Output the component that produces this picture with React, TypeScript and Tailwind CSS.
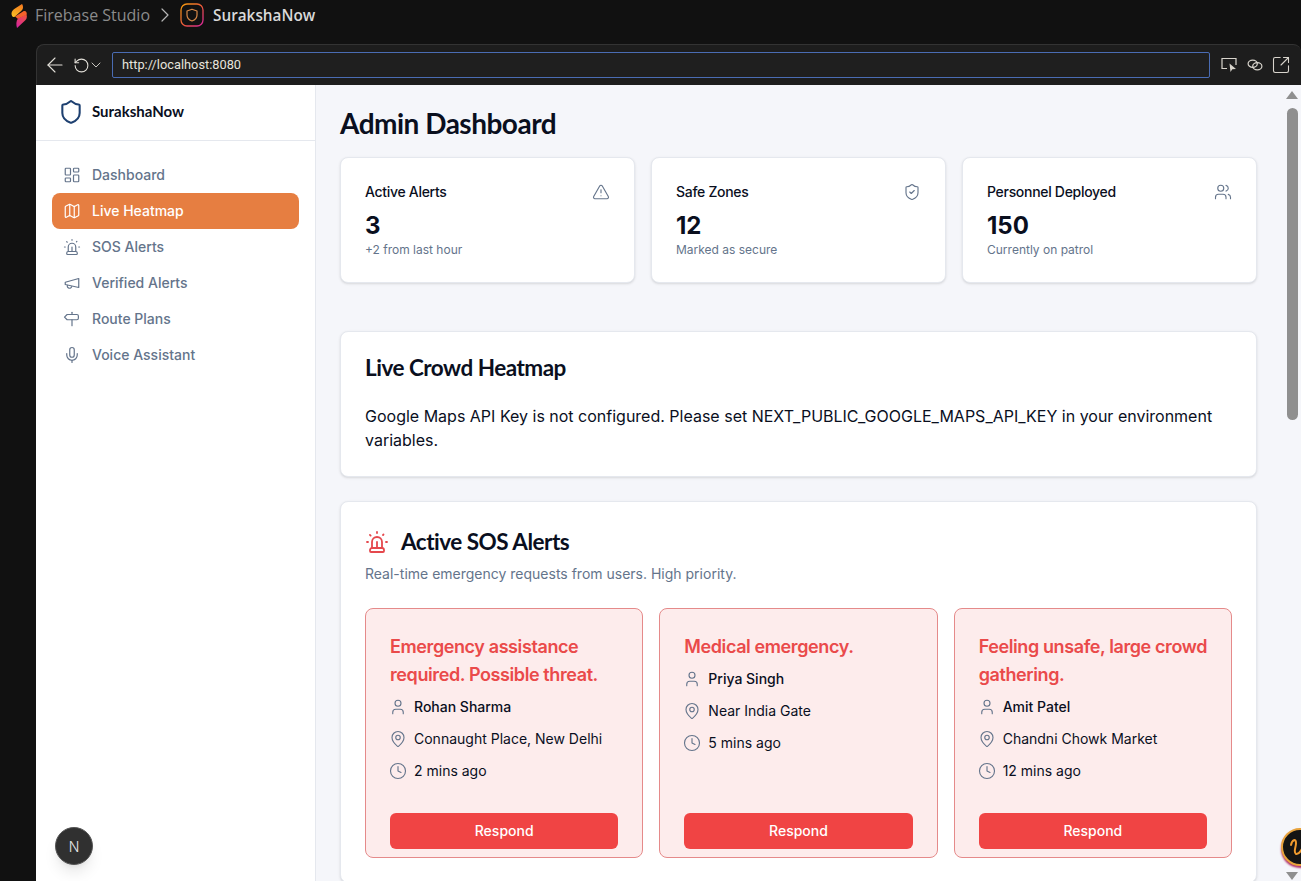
import React from 'react';
import {
  ArrowLeft,
  ChevronDown,
  ChevronRight,
  Clock,
  LayoutDashboard,
  Map as MapIcon,
  MapPin,
  Mic,
  RotateCw,
  Shield,
  ShieldCheck,
  Siren,
  SquareArrowOutUpRight,
  TriangleAlert,
  User,
  Users,
} from 'lucide-react';

const headingFont = "font-['Lato','Open_Sans',sans-serif] tracking-[-0.5px]";

interface IconProps {
  className?: string;
  strokeWidth?: number;
}

const MegaphoneIcon = ({ className, strokeWidth }: IconProps) => (
  <svg className={className} viewBox="0 0 24 24" fill="none" stroke="currentColor" strokeWidth={strokeWidth} strokeLinecap="round" strokeLinejoin="round">
    <path d="m3 11 18-5v12L3 14v-3z" />
    <path d="M11.6 16.8a3 3 0 1 1-5.8-1.6" />
  </svg>
);

const SignpostIcon = ({ className, strokeWidth }: IconProps) => (
  <svg className={className} viewBox="0 0 24 24" fill="none" stroke="currentColor" strokeWidth={strokeWidth} strokeLinecap="round" strokeLinejoin="round">
    <path d="M12 3v3" />
    <path d="M18.5 13h-13L2 9.5 5.5 6h13a2 2 0 0 1 2 2v3a2 2 0 0 1-2 2Z" />
    <path d="M12 13v8" />
  </svg>
);

const navItems = [
  { label: 'Dashboard', icon: LayoutDashboard },
  { label: 'Live Heatmap', icon: MapIcon, active: true },
  { label: 'SOS Alerts', icon: Siren },
  { label: 'Verified Alerts', icon: MegaphoneIcon },
  { label: 'Route Plans', icon: SignpostIcon },
  { label: 'Voice Assistant', icon: Mic },
];

const stats = [
  { title: 'Active Alerts', value: '3', note: '+2 from last hour', icon: TriangleAlert },
  { title: 'Safe Zones', value: '12', note: 'Marked as secure', icon: ShieldCheck },
  { title: 'Personnel Deployed', value: '150', note: 'Currently on patrol', icon: Users },
];

const alerts = [
  { title: 'Emergency assistance required. Possible threat.', name: 'Rohan Sharma', place: 'Connaught Place, New Delhi', time: '2 mins ago' },
  { title: 'Medical emergency.', name: 'Priya Singh', place: 'Near India Gate', time: '5 mins ago' },
  { title: 'Feeling unsafe, large crowd gathering.', name: 'Amit Patel', place: 'Chandni Chowk Market', time: '12 mins ago' },
];

const FirebaseLogo = () => (
  <svg width="20" height="26" viewBox="0 0 20 26" fill="none">
    <defs>
      <linearGradient id="fb-top" x1="0.6" y1="0" x2="0.3" y2="1">
        <stop offset="0" stopColor="#f57c1f" />
        <stop offset="1" stopColor="#fbbf24" />
      </linearGradient>
      <linearGradient id="fb-bottom" x1="0.8" y1="0" x2="0.2" y2="1">
        <stop offset="0" stopColor="#f0523d" />
        <stop offset="1" stopColor="#d6249f" />
      </linearGradient>
    </defs>
    <path d="M13 2 C15 5 14 8 11 10 L6 14.5 C4 16 2.5 14 2.5 11.5 C2.5 9 4 8 6 6.5 Z" fill="url(#fb-top)" />
    <path d="M6 14.5 L14 9.5 C16.5 8 18.5 10.5 17.5 13 L9 17 Z" fill="#f4622a" />
    <path d="M9 16.5 L17.5 12.5 C18.5 15.5 17.5 17.5 15 19.5 L8 26 C7 23 7 19 9 16.5 Z" fill="url(#fb-bottom)" />
  </svg>
);

const AppLogo = () => (
  <svg width="24" height="24" viewBox="0 0 24 24" fill="none">
    <defs>
      <linearGradient id="app-border" x1="0" y1="0" x2="1" y2="1">
        <stop offset="0" stopColor="#f59e0b" />
        <stop offset="0.55" stopColor="#e8553d" />
        <stop offset="1" stopColor="#d6249f" />
      </linearGradient>
    </defs>
    <rect x="1" y="1" width="22" height="22" rx="6" stroke="url(#app-border)" strokeWidth="1.3" />
    <path d="M12 6.2 L17 8 V12 C17 15 14.8 17 12 18 C9.2 17 7 15 7 12 V8 Z" stroke="#d98a4a" strokeWidth="1.2" strokeLinejoin="round" />
  </svg>
);

const ScreenIcon = () => (
  <svg width="16" height="16" viewBox="0 0 16 16" fill="none" stroke="#d8d4cc" strokeWidth="1.2">
    <path d="M6 11.5 H1 V1.5 H15 V8" />
    <path d="M8.5 6.5 L9.5 15 L11.3 12.3 L15 12 Z" fill="#d8d4cc" stroke="none" />
  </svg>
);

const LinksIcon = () => (
  <svg width="16" height="16" viewBox="0 0 16 16" fill="none" stroke="#d8d4cc" strokeWidth="1.2">
    <ellipse cx="5.7" cy="6.7" rx="4.6" ry="3.6" />
    <ellipse cx="10.3" cy="9.3" rx="4.6" ry="3.6" />
  </svg>
);

const Toolbar = () => (
  <div className="h-[41px] shrink-0 flex items-center bg-[#1d1d1d] rounded-t-lg border-t border-l border-[#333]">
    <ArrowLeft className="ml-[6px] w-[24px] h-[24px] text-[#e3e0d9]" strokeWidth={1.1} />
    <RotateCw className="ml-[6px] w-[17px] h-[17px] text-[#e3e0d9] -scale-x-100" strokeWidth={1.5} />
    <ChevronDown className="-ml-[2px] w-[16px] h-[16px] text-[#e3e0d9]" strokeWidth={1.3} />
    <div className="ml-[8px] w-[1098px] h-[26px] flex items-center px-[9px] bg-[#1f1f1f] border border-[#4a6cb3] rounded-[2px] text-[12.8px] text-[#e6e3dc] font-['Roboto',sans-serif]">
      http://localhost:8080
    </div>
    <div className="ml-[11px] flex items-center gap-[10px]">
      <ScreenIcon />
      <LinksIcon />
      <SquareArrowOutUpRight className="-ml-[2px] w-[20px] h-[20px] text-[#d8d4cc]" strokeWidth={1.3} />
    </div>
  </div>
);

const Sidebar = () => (
  <aside className="w-[280px] shrink-0 bg-white border-r border-[#e5e8ee] flex flex-col">
    <div className="h-[56px] flex items-center gap-[8px] pl-[22px] pb-[2px] border-b border-[#e5e8ee]">
      <Shield className="w-[26px] h-[26px] text-[#1e4070]" strokeWidth={1.9} />
      <span className="font-['Lato','Open_Sans',sans-serif] text-[15px] font-bold text-[#0a0f1e]">SurakshaNow</span>
    </div>
    <nav className="pt-4 px-4 flex flex-col font-['Inter',sans-serif]">
      {navItems.map(({ label, icon: Icon, active }) => (
        <div
          key={label}
          className={`h-[36px] flex items-center gap-[11px] pl-[11px] rounded-lg text-sm font-medium ${
            active ? 'bg-[#e67e41] text-white' : 'text-[#64748b]'
          }`}
        >
          <Icon className="w-[18px] h-[18px]" strokeWidth={1.6} />
          {label}
        </div>
      ))}
    </nav>
  </aside>
);

const StatCard = ({ title, value, note, icon: Icon }: (typeof stats)[number]) => (
  <div className="h-[126px] bg-white rounded-lg border border-[#e5e8ee] shadow-sm px-6 pt-6">
    <div className="flex items-center justify-between h-[20px]">
      <span className="text-sm font-medium tracking-[-0.3px] text-[#0a0f1e]">{title}</span>
      <Icon className="w-[18px] h-[18px] text-[#64748b]" strokeWidth={1.5} />
    </div>
    <div className="mt-[8px] text-2xl font-bold leading-8 text-[#0a0f1e]">{value}</div>
    <div className="text-xs leading-4 text-[#64748b]">{note}</div>
  </div>
);

const AlertCard = ({ title, name, place, time }: (typeof alerts)[number]) => (
  <div className="h-[250px] flex flex-col bg-[#fdecec] border border-[#e58a8a] rounded-lg px-6 pt-6 pb-2">
    <h3 className="text-lg leading-7 font-semibold tracking-[-0.4px] text-[#ea4a4a]">{title}</h3>
    <div className="mt-[8px] flex flex-col gap-[12px] text-sm leading-5 text-[#0a0f1e]">
      <div className="flex items-center gap-[7px] -ml-[1px]">
        <User className="w-[18px] h-[18px] text-[#64748b]" strokeWidth={1.5} />
        <span className="font-[450]">{name}</span>
      </div>
      <div className="flex items-center gap-[7px] -ml-[1px]">
        <MapPin className="w-[18px] h-[18px] text-[#64748b]" strokeWidth={1.5} />
        {place}
      </div>
      <div className="flex items-center gap-[7px] -ml-[1px]">
        <Clock className="w-[18px] h-[18px] text-[#64748b]" strokeWidth={1.5} />
        {time}
      </div>
    </div>
    <button className="mt-auto h-[36px] rounded-md bg-[#f04444] text-white text-sm font-medium">Respond</button>
  </div>
);

const Scrollbar = () => (
  <div className="w-[18px] shrink-0 bg-[#f5f6fa] flex flex-col items-center pt-[6px]">
    <div className="w-0 h-0 border-x-[6px] border-x-transparent border-b-[8px] border-b-[#8f8f8f]" />
    <div className="mt-[9px] w-[11px] h-[312px] rounded-full bg-[#8f8f8f]" />
    <div className="mt-auto mb-[1px] w-0 h-0 border-x-[6px] border-x-transparent border-t-[8px] border-t-[#8f8f8f]" />
  </div>
);

const App: React.FC = () => {
  return (
    <div className="relative w-[1301px] h-[881px] overflow-hidden bg-[#111111] flex flex-col font-['Inter',sans-serif]">
      <header className="h-[44px] shrink-0 flex items-center pl-[9px] pb-[14px] font-['Open_Sans',sans-serif]">
        <FirebaseLogo />
        <span className="ml-[6px] text-[16px] text-[#8b8b8b]">Firebase Studio</span>
        <ChevronRight className="ml-[3px] w-[24px] h-[24px] text-[#b5b5b5]" strokeWidth={1.2} />
        <span className="ml-[3px]"><AppLogo /></span>
        <span className="ml-[9px] text-[15.3px] font-semibold text-[#d9d9d9]">SurakshaNow</span>
      </header>

      <div className="ml-[36px] flex-1 min-h-0 flex flex-col">
        <Toolbar />
        <div className="flex-1 min-h-0 flex">
          <Sidebar />
          <main className="flex-1 min-w-0 bg-[#f5f6fa] overflow-hidden pl-6 pr-[26px] pt-[18px]">
            <h1 className={`${headingFont} text-[28px] leading-[40px] font-bold text-[#0a0f1e]`}>Admin Dashboard</h1>
            <div className="mt-[14px] grid grid-cols-3 gap-4">
              {stats.map((s) => (
                <StatCard key={s.title} {...s} />
              ))}
            </div>

            <section className="mt-[48px] h-[146px] bg-white rounded-lg border border-[#e5e8ee] shadow-sm px-6 pt-5">
              <h2 className={`${headingFont} text-[22.5px] leading-8 font-bold text-[#0a0f1e]`}>Live Crowd Heatmap</h2>
              <p className="mt-[20px] text-base leading-6 text-[#0a0f1e]">
                Google Maps API Key is not configured. Please set NEXT_PUBLIC_GOOGLE_MAPS_API_KEY in your environment variables.
              </p>
            </section>

            <section className="mt-[24px] bg-white rounded-lg border border-[#e5e8ee] shadow-sm px-6 pt-6 pb-6">
              <div className="flex items-center gap-[12px] h-[32px]">
                <Siren className="w-[24px] h-[24px] text-[#e5484d]" strokeWidth={1.8} />
                <h2 className={`${headingFont} text-[22.5px] leading-8 font-bold text-[#0a0f1e]`}>Active SOS Alerts</h2>
              </div>
              <p className="mt-[6px] text-sm leading-5 text-[#64748b]">Real-time emergency requests from users. High priority.</p>
              <div className="mt-[24px] grid grid-cols-3 gap-4">
                {alerts.map((a) => (
                  <AlertCard key={a.name} {...a} />
                ))}
              </div>
            </section>
          </main>
          <Scrollbar />
        </div>
      </div>

      <div className="absolute left-[55px] top-[827px] w-[38px] h-[38px] rounded-full bg-[#303030] border border-[#555] shadow-lg flex items-center justify-center text-[14px] font-light text-[#e8e8e8]">
        N
      </div>
      <div className="absolute left-[1281px] top-[828px] w-[38px] h-[38px] rounded-full bg-[#141414] border-2 border-[#e8a33c] shadow-[0_2px_2px_#b0306a]">
        <svg width="34" height="34" viewBox="0 0 34 34" fill="none" stroke="#ef9a2e" strokeWidth="2" strokeLinecap="round">
          <path d="M8 15 C9 10 13 8 13 13 C13 18 10 22 13 24 C16 25 20 18 21 13" />
        </svg>
      </div>
    </div>
  );
};

export default App;
